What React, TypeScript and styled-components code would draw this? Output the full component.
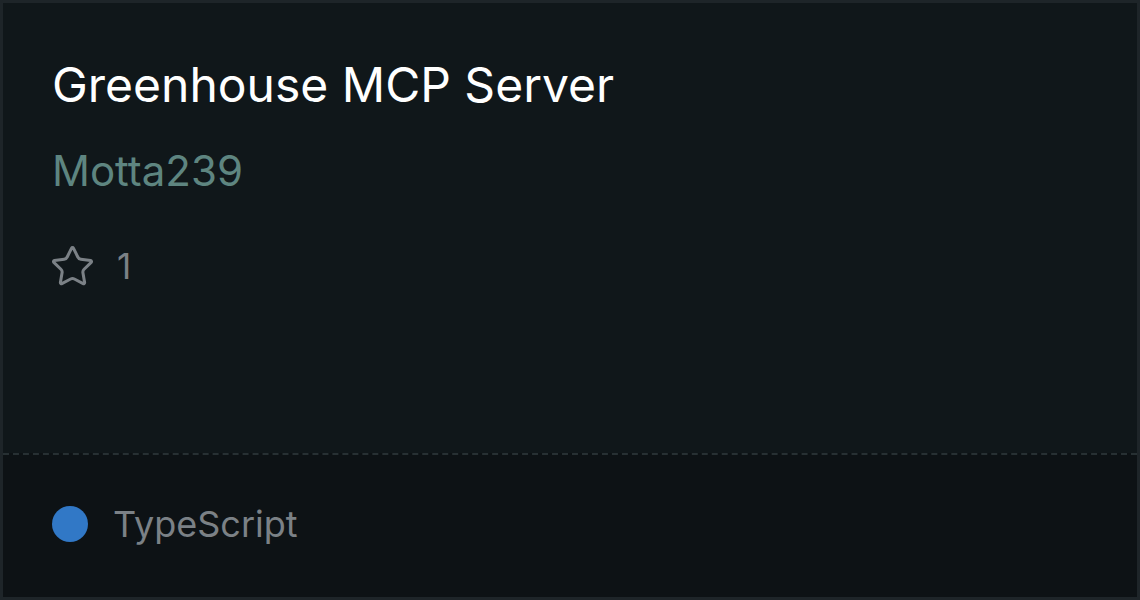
import React from "react";
import styled, { createGlobalStyle } from "styled-components";

const GlobalStyle = createGlobalStyle`
  html, body {
    margin: 0;
    padding: 0;
    background: #1e2529;
  }
  body {
    font-family: Inter, "Noto Sans", sans-serif;
  }
`;

const Card = styled.div`
  box-sizing: border-box;
  width: 1140px;
  height: 600px;
  border: 3px solid #1e2529;
  background: #10171a;
  display: flex;
  flex-direction: column;
`;

const Body = styled.div`
  flex: 1;
  padding: 53px 49px 0;
  display: flex;
  flex-direction: column;
`;

const Title = styled.div`
  color: #ffffff;
  font-size: 48px;
  line-height: 58px;
  font-weight: 400;
`;

const Author = styled.div`
  margin-top: 31px;
  color: #5e8580;
  font-size: 42px;
  line-height: 51px;
`;

const Stats = styled.div`
  margin-top: 50px;
  height: 40px;
  display: flex;
  align-items: center;
  gap: 24px;
  color: #7b8186;
  font-size: 35px;
  line-height: 40px;
`;

const Footer = styled.div`
  height: 144px;
  box-sizing: border-box;
  border-top: 2px dashed #273033;
  background: #0d1215;
  display: flex;
  align-items: center;
  padding: 0 49px 4px;
  gap: 25px;
`;

const Dot = styled.span<{ $color: string }>`
  width: 36px;
  height: 36px;
  border-radius: 50%;
  background: ${(p) => p.$color};
`;

const Lang = styled.span`
  color: #7b8186;
  font-size: 36px;
`;

function StarIcon() {
  return (
    <svg width="41" height="41" viewBox="1.2 1.2 21.6 21.6" fill="none" stroke="#7b8186" strokeWidth="1.6" strokeLinejoin="round" strokeLinecap="round">
      <path d="M11.525 2.295a.53.53 0 0 1 .95 0l2.31 4.679a2.123 2.123 0 0 0 1.595 1.16l5.166.756a.53.53 0 0 1 .294.904l-3.736 3.638a2.123 2.123 0 0 0-.611 1.878l.882 5.14a.53.53 0 0 1-.771.56l-4.618-2.428a2.122 2.122 0 0 0-1.973 0L6.396 21.01a.53.53 0 0 1-.77-.56l.881-5.139a2.122 2.122 0 0 0-.611-1.879L2.16 9.795a.53.53 0 0 1 .294-.906l5.165-.755a2.122 2.122 0 0 0 1.597-1.16z" />
    </svg>
  );
}

export default function App() {
  return (
    <>
      <GlobalStyle />
      <Card>
        <Body>
          <Title>Greenhouse MCP Server</Title>
          <Author>Motta239</Author>
          <Stats>
            <StarIcon />
            <span>1</span>
          </Stats>
        </Body>
        <Footer>
          <Dot $color="#3178c6" />
          <Lang>TypeScript</Lang>
        </Footer>
      </Card>
    </>
  );
}
